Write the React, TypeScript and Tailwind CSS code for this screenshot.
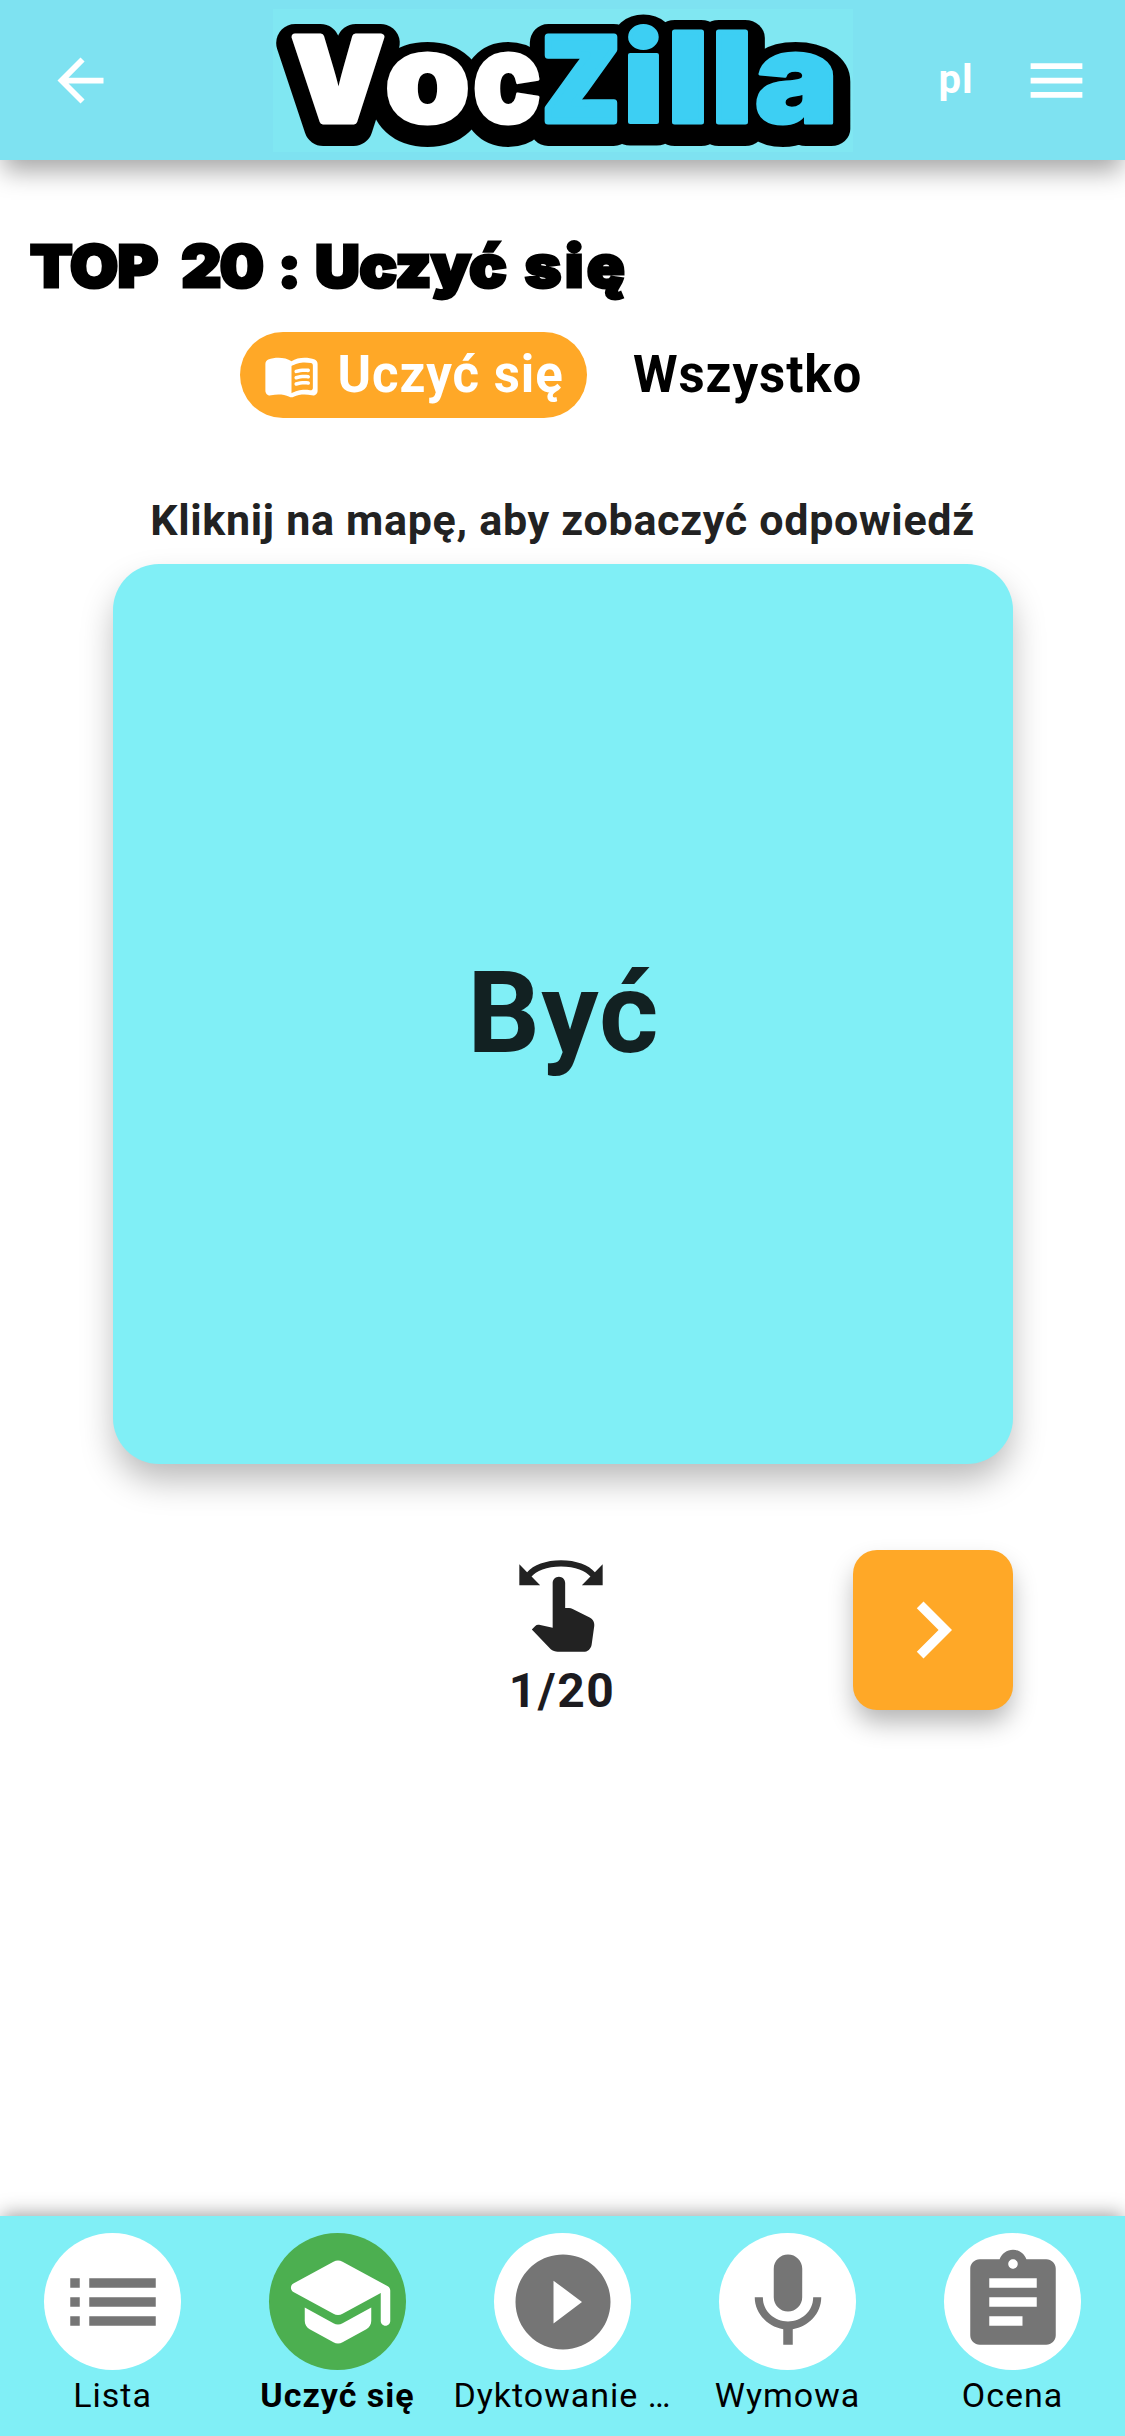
import type { ReactNode } from "react";
import {
  MdArrowBack,
  MdAssignment,
  MdChevronRight,
  MdList,
  MdMenu,
  MdMic,
  MdPlayCircleFilled,
  MdSwipe,
} from "react-icons/md";

type Letter = { ch: string; x: number; w: number; size: number; stroke: number; fill: string };

const WHITE = "#ffffff";
const BLUE = "#3dcff3";

const LETTERS: Letter[] = [
  { ch: "V", x: 19.5, w: 91, size: 115, stroke: 7, fill: WHITE },
  { ch: "o", x: 111.5, w: 86, size: 127, stroke: 3, fill: WHITE },
  { ch: "c", x: 199.5, w: 69, size: 127, stroke: 3, fill: WHITE },
  { ch: "Z", x: 269.5, w: 77, size: 115, stroke: 7, fill: BLUE },
  { ch: "i", x: 350.5, w: 40, size: 122, stroke: 4, fill: BLUE },
  { ch: "l", x: 395, w: 40, size: 124, stroke: 5, fill: BLUE },
  { ch: "l", x: 439, w: 40, size: 124, stroke: 5, fill: BLUE },
  { ch: "a", x: 481.5, w: 84, size: 127, stroke: 3, fill: BLUE },
];

function LogoLetters({ outline = false }: { outline?: boolean }) {
  return (
    <>
      {LETTERS.map((l, i) => (
        <text
          key={i}
          x={l.x}
          y={(outline ? 121 : 115) - l.stroke / 2}
          fontSize={l.size}
          textLength={l.w}
          lengthAdjust="spacingAndGlyphs"
          fill={outline ? "#000000" : l.fill}
          stroke={outline ? "#000000" : l.fill}
          strokeWidth={outline ? l.stroke + 31 : l.stroke}
        >
          {l.ch}
        </text>
      ))}
    </>
  );
}

function Logo() {
  return (
    <svg
      viewBox="0 0 580 143"
      className="h-[143px] w-[580px] overflow-visible bg-[#80e7f2] font-['Inter',sans-serif] font-black"
      strokeLinejoin="round"
      role="img"
      aria-label="VocZilla"
    >
      <LogoLetters outline />
      <LogoLetters />
    </svg>
  );
}

function BookIcon({ className }: { className?: string }) {
  return (
    <svg viewBox="0 0 24 24" fill="currentColor" className={className}>
      <path d="M17.5 4.5c-1.95 0-4.05.4-5.5 1.5-1.45-1.1-3.55-1.5-5.5-1.5-1.45 0-2.99.22-4.28.79C1.49 5.62 1 6.33 1 7.14v11.28c0 1.3 1.22 2.26 2.48 1.94.98-.25 2.02-.36 3.02-.36 1.56 0 3.22.26 4.56.92.6.3 1.28.3 1.87 0 1.34-.67 3-.92 4.56-.92 1 0 2.04.11 3.02.36 1.26.33 2.48-.63 2.48-1.94V7.14c0-.81-.49-1.52-1.22-1.85-1.28-.57-2.82-.79-4.27-.79zM21 17.23c0 .63-.58 1.09-1.2.98-.75-.14-1.53-.2-2.3-.2-1.7 0-4.15.65-5.5 1.5V8c1.35-.85 3.8-1.5 5.5-1.5.92 0 1.83.09 2.7.28.46.1.8.51.8.98v9.47z" />
      <path d="M13.98 11.01c-.32 0-.61-.2-.71-.52-.13-.39.09-.82.48-.94 1.54-.5 3.53-.66 5.36-.45.41.05.71.42.66.83-.05.41-.42.71-.83.66-1.62-.19-3.39-.04-4.73.39-.08.01-.16.03-.23.03z" />
      <path d="M13.98 13.67c-.32 0-.61-.2-.71-.52-.13-.39.09-.82.48-.94 1.54-.5 3.53-.66 5.36-.45.41.05.71.42.66.83-.05.41-.42.71-.83.66-1.62-.19-3.39-.04-4.73.39-.08.01-.16.03-.23.03z" />
      <path d="M13.98 16.33c-.32 0-.61-.2-.71-.52-.13-.39.09-.82.48-.94 1.54-.5 3.53-.66 5.36-.45.41.05.71.42.66.83-.05.41-.42.71-.83.66-1.62-.19-3.39-.04-4.73.39-.08.01-.16.03-.23.03z" />
    </svg>
  );
}

function SchoolIcon() {
  return (
    <svg viewBox="0 0 24 24" fill="currentColor" className="size-[114px]">
      <path d="M5 13.18v2.81c0 .73.4 1.41 1.04 1.76l5 2.73c.6.33 1.32.33 1.92 0l5-2.73c.64-.35 1.04-1.03 1.04-1.76v-2.81l-6.04 3.3c-.6.33-1.32.33-1.92 0L5 13.18zm6.04-9.66l-8.43 4.6c-.69.38-.69 1.38 0 1.76l8.43 4.6c.6.33 1.32.33 1.92 0L21 10.09V16c0 .55.45 1 1 1s1-.45 1-1V9.59c0-.37-.2-.7-.52-.88l-9.52-5.19a2.04 2.04 0 0 0-1.92 0z" />
    </svg>
  );
}

function NavItem({ label, active = false, children }: { label: string; active?: boolean; children: ReactNode }) {
  return (
    <button className="flex w-[225px] flex-col items-center pt-[17px]">
      <span
        className={
          active
            ? "flex size-[137px] items-center justify-center rounded-full bg-[#4caf50] text-white"
            : "flex size-[137px] items-center justify-center rounded-full bg-white text-[#757575]"
        }
      >
        {children}
      </span>
      <span
        className={
          active
            ? "mt-[5px] text-[34px] leading-[40px] font-bold tracking-[1px] whitespace-nowrap"
            : "mt-[5px] text-[34px] leading-[40px] tracking-[1px] whitespace-nowrap"
        }
      >
        {label}
      </span>
    </button>
  );
}

export default function App() {
  return (
    <div className="flex h-[2436px] w-[1125px] flex-col overflow-hidden bg-white font-['Roboto',sans-serif] text-black">
      <header className="flex h-[160px] shrink-0 items-center bg-[#7ee2f1] pl-[45.5px] text-white shadow-[0_14px_24px_-3px_rgba(0,0,0,0.35)]">
        <MdArrowBack className="size-[69px]" />
        <div className="ml-[158px]">
          <Logo />
        </div>
        <span className="ml-[86px] w-[83px] text-[40px] leading-[48px] font-bold tracking-[1px]">pl</span>
        <MdMenu className="size-[69px]" />
      </header>

      <main className="flex flex-1 flex-col">
        <h1 className="mt-[66px] ml-[30px] flex h-[80px] origin-left scale-x-[1.07] items-center font-['Inter',sans-serif] text-[58px] leading-[80px] font-black [-webkit-text-stroke:3px_black]">
          <span className="tracking-[-0.5px]">TOP</span>
          <span className="ml-[22px] tracking-[-1.5px]">20</span>
          <span className="ml-[14.5px]">:</span>
          <span className="ml-[13px] tracking-[-0.3px]">Uczyć</span>
          <span className="ml-[17px] tracking-[3.5px]">się</span>
        </h1>

        <div className="mt-[26px] ml-[240px] flex h-[86px] items-center text-[51px] leading-[60px] font-bold tracking-[0.9px]">
          <button className="flex h-[86px] w-[346.5px] items-center rounded-full bg-[#ffa827] pl-[23px] whitespace-nowrap text-white">
            <BookIcon className="mr-[17.5px] size-[57px] shrink-0" />
            <span>Uczyć się</span>
          </button>
          <button className="ml-[46.5px]">Wszystko</button>
        </div>

        <p className="mt-[77px] text-center text-[43px] leading-[50px] font-bold tracking-[0.7px] whitespace-nowrap text-[#222222]">
          Kliknij na mapę, aby zobaczyć odpowiedź
        </p>

        <div className="mx-auto mt-[19px] flex size-[900px] items-center justify-center rounded-[46px] bg-[#80eff6] pb-[2px] pl-[2px] text-[114px] leading-[134px] font-bold tracking-[1.2px] text-[#122122] shadow-[0_18px_34px_-2px_rgba(0,0,0,0.28)]">
          Być
        </div>

        <div className="mx-auto mt-[86px] grid w-[900px] grid-cols-[160px_1fr_160px]">
          <div className="col-start-2 flex flex-col items-center pt-[6px]">
            <MdSwipe className="mr-[3px] size-[100px] text-[#222222]" />
            <span className="mt-[6px] mr-px text-[48px] leading-[58px] font-bold tracking-[1.5px] text-[#1c1b1f]">1/20</span>
          </div>
          <button className="flex size-[160px] items-center justify-center rounded-[24px] bg-[#ffa827] text-white shadow-[0_14px_26px_-2px_rgba(0,0,0,0.3)]">
            <MdChevronRight className="size-[114px]" />
          </button>
        </div>
      </main>

      <nav className="flex h-[220px] shrink-0 bg-[#80eff6] shadow-[0_-4px_18px_-2px_rgba(0,0,0,0.38)]">
        <NavItem label="Lista">
          <MdList className="size-[114px]" />
        </NavItem>
        <NavItem label="Uczyć się" active>
          <SchoolIcon />
        </NavItem>
        <NavItem label="Dyktowanie …">
          <MdPlayCircleFilled className="size-[114px]" />
        </NavItem>
        <NavItem label="Wymowa">
          <MdMic className="size-[114px]" />
        </NavItem>
        <NavItem label="Ocena">
          <MdAssignment className="size-[114px]" />
        </NavItem>
      </nav>
    </div>
  );
}
